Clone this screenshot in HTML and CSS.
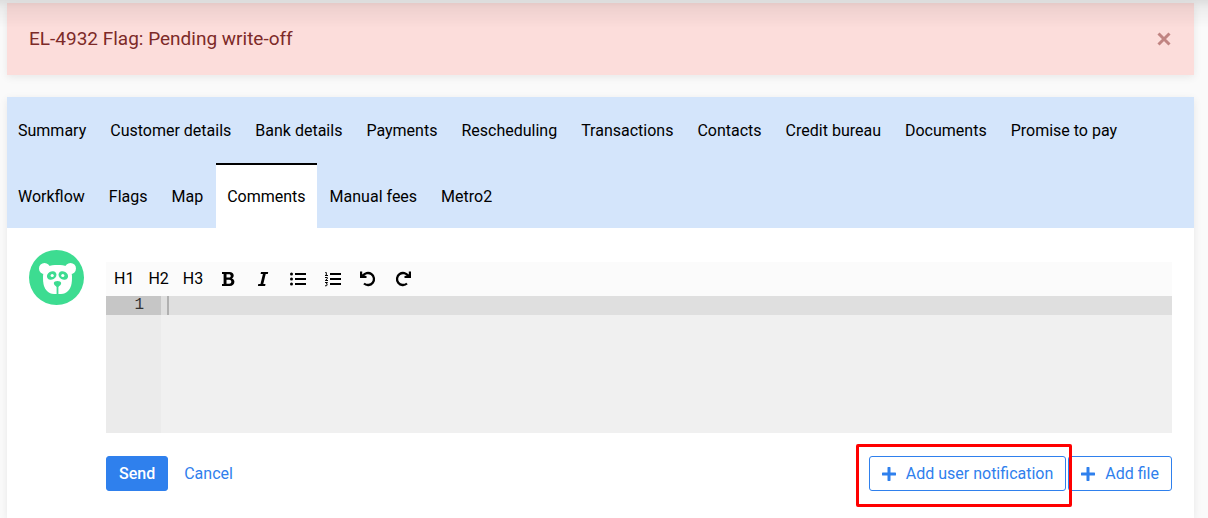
FILE: index.html
```html
<!DOCTYPE html>
<html lang="en">
<head>
  <meta charset="UTF-8">
  <meta name="viewport" content="width=device-width, initial-scale=1">
  <title>Comments</title>
  <link rel="stylesheet" href="styles.css">
</head>
<body>

  <div class="top-shadow"></div>

  <main class="page">
    <div class="alert" role="alert">
      <span>EL-4932 Flag: Pending write-off</span>
      <button type="button" class="alert-close" aria-label="Close">
        <svg width="16" height="16" viewBox="0 0 16 16"><path d="M2.500 2.500l11 11M13.500 2.500l-11 11" fill="none" stroke="currentColor" stroke-width="3"/></svg>
      </button>
    </div>

    <section class="card">
      <nav class="tabs">
        <a href="#">Summary</a>
        <a href="#">Customer details</a>
        <a href="#">Bank details</a>
        <a href="#">Payments</a>
        <a href="#">Rescheduling</a>
        <a href="#">Transactions</a>
        <a href="#">Contacts</a>
        <a href="#">Credit bureau</a>
        <a href="#">Documents</a>
        <a href="#">Promise to pay</a>
        <a href="#">Workflow</a>
        <a href="#">Flags</a>
        <a href="#">Map</a>
        <a href="#" class="active">Comments</a>
        <a href="#">Manual fees</a>
        <a href="#">Metro2</a>
      </nav>

      <div class="comment">
        <svg class="avatar" width="55" height="55" viewBox="0 0 55 55" aria-hidden="true">
          <circle cx="27.500" cy="27.500" r="27.500" fill="#3ddc91"/>
          <g fill="#fff">
            <circle cx="15.500" cy="18.500" r="5.500"/>
            <circle cx="41.500" cy="18.500" r="5.500"/>
            <path d="M19 16c5-1.500 14-1.500 19 0 3 2 5 6 5 11 0 7-1 11-4 14-2 2-4 3-7 3h-7c-3 0-5-1-7-3-3-3-4-7-4-14 0-5 2-9 5-11z"/>
          </g>
          <g fill="#3ddc91">
            <ellipse cx="22.700" cy="25.500" rx="5" ry="4" transform="rotate(-30 22.700 25.500)"/>
            <ellipse cx="34.300" cy="25.500" rx="5" ry="4" transform="rotate(30 34.300 25.500)"/>
            <path d="M24.800 33c0-2.700 7.400-2.700 7.400 0 0 1.700-1.600 2.700-2.800 4v7.500h-1.800V37c-1.200-1.300-2.800-2.300-2.800-4z"/>
          </g>
          <g fill="#fff">
            <circle cx="23.200" cy="25.500" r="1.600"/>
            <circle cx="33.800" cy="25.500" r="1.600"/>
          </g>
        </svg>

        <form class="comment-form">
          <div class="toolbar">
            <button type="button">H1</button>
            <button type="button">H2</button>
            <button type="button">H3</button>
            <button type="button" class="tool-icon" aria-label="Bold">
              <svg width="16" height="16" viewBox="0 0 16 16"><path fill-rule="evenodd" d="M2 1h7.500c2.500 0 4.200 1.300 4.200 3.600 0 1.400-.7 2.400-1.800 2.900 1.500.5 2.500 1.600 2.500 3.300 0 2.700-1.900 4.200-4.700 4.200H2v-2h1.600V3H2zM6.500 3.200v3.400h2.300c1.200 0 1.900-.6 1.900-1.700s-.7-1.700-1.900-1.700zM6.500 8.800v4h2.700c1.300 0 2.100-.7 2.100-2s-.8-2-2.100-2z"/></svg>
            </button>
            <button type="button" class="tool-icon" aria-label="Italic">
              <svg width="16" height="16" viewBox="0 0 16 16"><path d="M6 1h7.200l-.4 2h-2.100L8.300 13h2.200l-.4 2H2.900l.4-2h2.200L7.900 3H5.600z"/></svg>
            </button>
            <button type="button" class="tool-icon" aria-label="Bulleted list">
              <svg width="18" height="16" viewBox="0 0 18 16"><path d="M6 2h11v2H6zM6 7h11v2H6zM6 12h11v2H6z"/><circle cx="2.500" cy="3" r="1.500"/><circle cx="2.500" cy="8" r="1.500"/><circle cx="2.500" cy="13" r="1.500"/></svg>
            </button>
            <button type="button" class="tool-icon" aria-label="Numbered list">
              <svg width="18" height="16" viewBox="0 0 18 16"><path d="M6 2h11v2H6zM6 7h11v2H6zM6 12h11v2H6z"/><path d="M1.300 1.500h1v3M1 4.500h3M1 6.500h2.300v1.200L1.300 9.500H4M1 11.500h2.500L2.300 13c1.500 0 1.600 2-1.300 1.800" fill="none" stroke="#000"/></svg>
            </button>
            <button type="button" class="tool-icon" aria-label="Undo">
              <svg width="16" height="16" viewBox="0 0 16 16"><path d="M2.800 5A6 6 0 1 1 4 12.500" fill="none" stroke="#000" stroke-width="2.300"/><path d="M0 .5V7h6.500V5L4 4.500 2.200 3V.5z"/></svg>
            </button>
            <button type="button" class="tool-icon" aria-label="Redo">
              <svg width="16" height="16" viewBox="0 0 16 16"><path d="M13.200 5A6 6 0 1 0 12 12.500" fill="none" stroke="#000" stroke-width="2.300"/><path d="M16 .5V7H9.500V5l2.500-.5L13.800 3V.5z"/></svg>
            </button>
          </div>

          <div class="editor">
            <label class="gutter" for="commentText"><span>1</span></label>
            <div class="editor-body">
              <textarea id="commentText" aria-label="Comment"></textarea>
              <span class="cursor"></span>
            </div>
          </div>

          <div class="actions">
            <button type="submit" class="btn btn-primary">Send</button>
            <a href="#" class="cancel">Cancel</a>
            <div class="actions-right">
              <div class="highlight">
                <button type="button" class="btn btn-outline">
                  <svg width="14" height="14" viewBox="0 0 14 14"><path d="M7 1v12M1 7h12" stroke="currentColor" stroke-width="3" stroke-linecap="round"/></svg>
                  Add user notification
                </button>
              </div>
              <button type="button" class="btn btn-outline">
                <svg width="14" height="14" viewBox="0 0 14 14"><path d="M7 1v12M1 7h12" stroke="currentColor" stroke-width="3" stroke-linecap="round"/></svg>
                Add file
              </button>
            </div>
          </div>
        </form>
      </div>
    </section>
  </main>

</body>
</html>
```
FILE: styles.css
```css
* {
  box-sizing: border-box;
}

body {
  margin: 0;
  font-family: Roboto, "Liberation Sans", sans-serif;
  font-size: 16px;
  line-height: 24px;
  color: #000;
  background: #fafafa;
}

button {
  font: inherit;
  color: inherit;
  cursor: pointer;
}

svg {
  display: block;
}

/* shadow of the bar above the page */
.top-shadow {
  position: fixed;
  top: 0;
  left: 0;
  right: 0;
  height: 28px;
  background: linear-gradient(rgba(0, 0, 0, 0.11), rgba(0, 0, 0, 0.05) 30%, rgba(0, 0, 0, 0));
  pointer-events: none;
}

.page {
  display: flex;
  flex-direction: column;
  gap: 22px;
  min-height: 100vh;
  padding: 3px 14px 0 7px;
}

.alert {
  display: flex;
  align-items: center;
  justify-content: space-between;
  padding: 24px 22px;
  font-size: 19px;
  color: #7d2a28;
  background: #fcdddb;
  box-shadow: 0 2px 8px rgba(0, 0, 0, 0.08);
}

.alert-close {
  padding: 0;
  border: none;
  background: none;
  color: #c08482;
}

.card {
  flex: 1;
  background: #fff;
  box-shadow: 0 2px 8px rgba(0, 0, 0, 0.08);
}

.tabs {
  display: flex;
  flex-wrap: wrap;
  gap: 1px 2px;
  background: #d4e5fb;
}

.tabs a {
  padding: 20px 11px 19px;
  border-top: 2px solid transparent;
  color: #000;
  text-decoration: none;
}

.tabs a.active {
  border-top-color: #000;
  background: #fff;
}

.comment {
  display: flex;
  align-items: flex-start;
  gap: 22px;
  padding: 22px;
}

.avatar {
  flex: none;
}

.comment-form {
  flex: 1;
  padding-top: 12px;
}

.toolbar {
  display: flex;
  align-items: center;
  gap: 14px;
  height: 34px;
  padding: 0 8px;
  background: #fbfbfb;
}

.toolbar button {
  padding: 0;
  border: none;
  background: none;
}

.toolbar .tool-icon {
  display: flex;
  justify-content: center;
  width: 21px;
}

.editor {
  display: flex;
  height: 137px;
  font-family: "Liberation Mono", monospace;
  line-height: 19px;
  background: #f0f0f0;
}

.gutter {
  width: 55px;
  text-align: right;
  color: #333;
  background: #ebebeb;
}

.gutter span {
  display: block;
  padding-right: 17px;
  background: #c6c6c6;
}

.editor-body {
  position: relative;
  flex: 1;
}

.editor textarea {
  display: block;
  width: 100%;
  height: 100%;
  padding: 0 6px;
  border: none;
  outline: none;
  resize: none;
  font: inherit;
  background: linear-gradient(#dfdfdf, #dfdfdf) 0 0 / 100% 19px no-repeat;
}

.cursor {
  position: absolute;
  top: 0;
  left: 6px;
  width: 2px;
  height: 19px;
  background: #b0b0b0;
}

.actions {
  display: flex;
  align-items: center;
  gap: 16px;
  padding-top: 23px;
}

.actions-right {
  display: flex;
  gap: 2px;
  margin-left: auto;
}

.btn {
  display: flex;
  align-items: center;
  gap: 10px;
  height: 35px;
  padding: 0 12px;
  border: 1px solid #2f80ed;
  border-radius: 3px;
}

.btn-primary {
  color: #fff;
  font-weight: 500;
  background: #2f80ed;
}

.btn-outline {
  color: #2f80ed;
  background: #fff;
}

.cancel {
  color: #2f80ed;
  text-decoration: none;
}

.highlight {
  position: relative;
}

.highlight::after {
  content: "";
  position: absolute;
  top: -12px;
  right: -6px;
  bottom: -16px;
  left: -13px;
  border: 3px solid #f00;
  border-radius: 2px;
  pointer-events: none;
}
```
